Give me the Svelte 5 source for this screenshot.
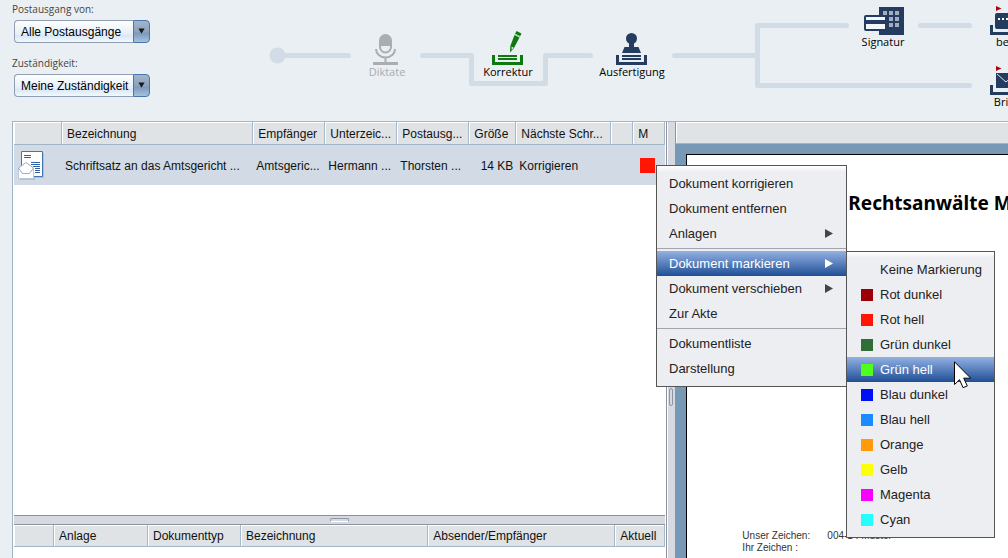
<script>
  let outbox = $state("Alle Postausgänge");
  let responsibility = $state("Meine Zuständigkeit");
  let marked = $state("Grün hell");

  // x / y is the top left corner of the 40px wide icon
  const steps = [
    { id: "dictate", name: "Diktate", x: 367, y: 31 },
    { id: "correct", name: "Korrektur", x: 488, y: 31 },
    { id: "issue", name: "Ausfertigung", x: 612, y: 31 },
    { id: "sign", name: "Signatur", x: 863, y: 1 },
    { id: "bea", name: "beA", x: 986, y: 1 },
    { id: "letter", name: "Brief", x: 986, y: 61 },
  ];

  const menu = [
    { name: "Dokument korrigieren" },
    { name: "Dokument entfernen" },
    { name: "Anlagen", arrow: true },
    { line: true },
    { name: "Dokument markieren", arrow: true, open: true },
    { name: "Dokument verschieben", arrow: true },
    { name: "Zur Akte" },
    { line: true },
    { name: "Dokumentliste" },
    { name: "Darstellung" },
  ];

  const colors = [
    { name: "Keine Markierung", color: "transparent" },
    { name: "Rot dunkel", color: "#9b0007" },
    { name: "Rot hell", color: "#ff1605" },
    { name: "Grün dunkel", color: "#2f6f37" },
    { name: "Grün hell", color: "#4dff1a" },
    { name: "Blau dunkel", color: "#000ff5" },
    { name: "Blau hell", color: "#1b8cff" },
    { name: "Orange", color: "#ff9a0b" },
    { name: "Gelb", color: "#fdff0a" },
    { name: "Magenta", color: "#f800ff" },
    { name: "Cyan", color: "#25fdff" },
  ];
</script>

{#snippet tray()}
  <path d="M4 24h3v7h25v-7h3v10H4z" />
{/snippet}

<div class="page">
  <header>
    <div class="filters">
      <div class="filter">
        <label for="outbox">Postausgang von:</label>
        <div class="combo">
          <select id="outbox" bind:value={outbox}>
            <option>Alle Postausgänge</option>
          </select>
          <svg viewBox="0 0 17 23"><path d="M5 8h7l-3.500 6z" /></svg>
        </div>
      </div>
      <div class="filter">
        <label for="responsibility">Zuständigkeit:</label>
        <div class="combo">
          <select id="responsibility" bind:value={responsibility}>
            <option>Meine Zuständigkeit</option>
          </select>
          <svg viewBox="0 0 17 23"><path d="M5 8h7l-3.500 6z" /></svg>
        </div>
      </div>
    </div>

    <svg class="track" width="1008" height="110" viewBox="0 0 1008 110">
      <circle cx="277.5" cy="55.5" r="8" />
      <path d="M278 55.500H348.500M422.500 55.500H471.500V83.500H545.500V55.500H590.500M674.500 55.500H757.500M846.500 25.500H757.500V85.500H969.500M920.500 25.500H969.500" />
    </svg>

    {#each steps as step}
      <button class="step {step.id}" style="left: {step.x}px; top: {step.y}px">
        <svg width="42" height="34" viewBox="0 0 42 34">
          {#if step.id === "dictate"}
            <path d="M12 9.500a6.500 6.500 0 0 1 13 0V16a6.500 6.500 0 0 1-13 0zM14 15v1a4.500 4.500 0 0 0 9 0v-1z" fill-rule="evenodd" />
            <path d="M9 18a9.500 8.500 0 0 0 19 0M18.500 26v5" class="line" />
            <path d="M6 31h25v3H6z" />
          {:else if step.id === "correct"}
            {@render tray()}
            <path d="M10 24h19v2H10zM10 27h19v2H10z" />
            <path d="M28.500 0l5 2.500-1.500 3-5-2.500zM26.500 4l5 2.500-5.500 10.500-4 4.500.3-6.500z" />
            <path d="M23.600 15.500l2 1.200-2 2z" class="shine" />
            <path d="M28 3.400l4 2" class="groove" />
          {:else if step.id === "issue"}
            {@render tray()}
            <path d="M10 24h19v2H10zM10 27h19v2H10z" />
            <circle cx="19.500" cy="7.500" r="5.500" />
            <path d="M17 11h5v5h4.500l2.500 6H10l2.500-6H17z" />
          {:else if step.id === "sign"}
            <path d="M16 6h25v28H16z" />
            <path d="M20 10h4v4h-4zM26 10h4v4h-4zM32 10h4v4h-4zM26 16h4v4h-4zM32 16h4v4h-4zM26 22h4v4h-4zM32 22h4v4h-4z" class="window" />
            <rect x="2" y="15" width="21" height="14" rx="1" class="card" />
            <path d="M2 19h21v4H2z" />
          {:else if step.id === "bea"}
            {@render tray()}
            <rect x="9" y="12" width="22" height="16" rx="2" />
            <path d="M12 17h2v2h-2zM16 17h2v2h-2zM20 17h2v2h-2zM24 17h2v2h-2z" class="dots" />
            <path d="M10 5l5.500 2.500L10 10z" class="flag" />
          {:else}
            {@render tray()}
            <path d="M10 12h20v15H10z" />
            <path d="M11 13l9 8 9-8" class="fold" />
            <path d="M10 5l5.500 2.500L10 10z" class="flag" />
          {/if}
        </svg>
        <span>{step.name}</span>
      </button>
    {/each}
  </header>

  <main>
    <section class="lists">
      <table>
        <colgroup>
          <col class="w48" /><col /><col class="w72" /><col class="w72" /><col class="w72" />
          <col class="w47" /><col class="w95" /><col class="w22" /><col class="w32" />
        </colgroup>
        <thead>
          <tr>
            <th></th>
            <th>Bezeichnung</th>
            <th>Empfänger</th>
            <th>Unterzeic...</th>
            <th>Postausg...</th>
            <th>Größe</th>
            <th>Nächste Schr...</th>
            <th></th>
            <th>M</th>
          </tr>
        </thead>
        <tbody>
          <tr>
            <td class="icon">
              <svg width="28" height="30" viewBox="0 0 28 30">
                <path d="M5 3h21v25H5zM2 20h15v10H2z" fill="#b5bfcb" />
                <path d="M3.500 1.500h21v25h-21z" fill="#fff" stroke="#4474b2" />
                <path d="M6 5.500h7M6 7.500h7M13 12.500h9M13 14.500h9M15 16.500h7M17 18.500h5M17 20.500h5M17 22.500h5" stroke="#2f62a5" />
                <path d="M.5 18.500h15v10H.5z" fill="#fff" stroke="#b9cadd" />
                <path d="M8 12.500l7.500 5.500-4 5.500h-7L.5 18z" fill="#fff" stroke="#8fadcd" stroke-linejoin="round" />
              </svg>
            </td>
            <td>Schriftsatz an das Amtsgericht ...</td>
            <td>Amtsgeric...</td>
            <td>Hermann ...</td>
            <td>Thorsten ...</td>
            <td class="size">14 KB</td>
            <td>Korrigieren</td>
            <td></td>
            <td class="mark"><i></i></td>
          </tr>
        </tbody>
      </table>
      <div class="rows"></div>
      <div class="hsplit"><i></i></div>
      <div class="attachments">
        <table>
          <colgroup>
            <col class="w40" /><col class="w94" /><col class="w93" /><col /><col class="w187" /><col class="w50" />
          </colgroup>
          <thead>
            <tr>
              <th></th>
              <th>Anlage</th>
              <th>Dokumenttyp</th>
              <th>Bezeichnung</th>
              <th>Absender/Empfänger</th>
              <th>Aktuell</th>
            </tr>
          </thead>
        </table>
      </div>
    </section>

    <div class="vsplit"><i></i></div>

    <section class="preview">
      <div class="bar"></div>
      <div class="desk">
        <article>
          <h1>Rechtsanwälte M</h1>
          <dl>
            <dt>Unser Zeichen:</dt>
            <dd>004-14 Muster</dd>
            <dt>Ihr Zeichen :</dt>
            <dd></dd>
          </dl>
        </article>
      </div>
    </section>
  </main>

  <ul class="menu main-menu">
    {#each menu as item}
      {#if item.line}
        <li class="line"></li>
      {:else}
        <li>
          <button class:active={item.open}>
            {item.name}
            {#if item.arrow}
              <svg width="8" height="9" viewBox="0 0 8 9"><path d="M0 0l8 4.500L0 9z" /></svg>
            {/if}
          </button>
          {#if item.open}
            <ul class="menu sub-menu">
              {#each colors as c}
                <li>
                  <button class:active={marked === c.name} onclick={() => (marked = c.name)}>
                    <i style="background: {c.color}"></i>{c.name}
                  </button>
                </li>
              {/each}
            </ul>
          {/if}
        </li>
      {/if}
    {/each}
  </ul>

  <svg class="cursor" width="20" height="29" viewBox="0 0 20 29">
    <path d="M.5.800V23.500l5-4.800 3.600 8 4.200-1.800-3.600-7.700h7z" />
  </svg>
</div>

<style>
  :global(body) {
    margin: 0;
    overflow: hidden;
  }
  .page {
    position: relative;
    display: flex;
    flex-direction: column;
    height: 100vh;
    overflow: hidden;
    background: #eaeff3;
    color: #111;
    font: 12px "Liberation Sans", Arial, sans-serif;
  }
  button {
    border: 0;
    padding: 0;
    background: none;
    color: inherit;
    font: inherit;
  }

  /* top */
  header {
    position: relative;
    flex: none;
    padding: 2px 12px 24px;
    overflow: hidden;
  }
  .filters {
    display: flex;
    flex-direction: column;
    gap: 13px;
    width: 138px;
  }
  .filter {
    display: flex;
    flex-direction: column;
    gap: 4px;
  }
  label {
    color: #444;
    font: 10px/14px "Open Sans", "Noto Sans", sans-serif;
  }
  .combo {
    display: flex;
    height: 23px;
    margin-left: 2px;
  }
  select {
    flex: 1;
    min-width: 0;
    appearance: none;
    border: 1px solid #919db0;
    border-right: 0;
    border-radius: 4px 0 0 4px;
    padding: 0 0 0 6px;
    background: linear-gradient(#fdfeff, #e6f0f8 60%, #d9e8f6 70%, #f3f9fd);
    color: #000;
    font: inherit;
  }
  .combo svg {
    box-sizing: border-box;
    width: 17px;
    height: 23px;
    border: 1px solid #4a76b0;
    border-radius: 0 4px 4px 0;
    background: linear-gradient(#a3b5c9, #8ba3bf 50%, #7c9abd 60%, #a6c2dc);
    pointer-events: none;
  }
  .combo path {
    fill: #1a1a1a;
  }
  .track {
    position: absolute;
    left: 0;
    top: 0;
    fill: none;
    stroke: #d2dce6;
    stroke-width: 5;
    stroke-linecap: round;
    stroke-linejoin: round;
  }
  .track circle {
    fill: #d2dce6;
    stroke: none;
  }
  .step {
    position: absolute;
    display: flex;
    flex-direction: column;
    align-items: center;
    width: 40px;
    color: #000;
    font: 11px/14px "Open Sans", "Noto Sans", sans-serif;
    white-space: nowrap;
  }
  .step svg {
    align-self: flex-start;
    flex: none;
    fill: #233c60;
    overflow: visible;
  }
  .step .line {
    fill: none;
    stroke: #aaadb2;
    stroke-width: 2;
  }
  .dictate {
    color: #a9acb1;
  }
  .dictate svg {
    fill: #aaadb2;
  }
  .correct svg {
    fill: #117711;
  }
  .step .shine {
    fill: #d8f5d8;
  }
  .step .groove {
    stroke: #6fe06f;
  }
  .step .window {
    fill: #a4adbd;
  }
  .step .card {
    fill: #f4f7f9;
    stroke: #233c60;
    stroke-width: 2;
  }
  .step .dots {
    fill: #fff;
  }
  .step .flag {
    fill: #b00014;
  }
  .step .fold {
    fill: none;
    stroke: #dfe5ec;
  }

  /* tables */
  main {
    flex: 1;
    display: flex;
    min-height: 0;
    margin-left: 12px;
    border-top: 1px solid #a2b5c4;
  }
  .lists {
    flex: 654 1 0;
    display: flex;
    flex-direction: column;
    min-width: 0;
    box-sizing: border-box;
    border-left: 1px solid #9db3c6;
    padding: 0 1px;
    background: #fff;
  }
  table {
    width: 100%;
    table-layout: fixed;
    border-collapse: separate;
    border-spacing: 0;
  }
  th,
  td {
    box-sizing: border-box;
    overflow: hidden;
    text-align: left;
    white-space: nowrap;
  }
  th {
    height: 23px;
    border-right: 1px solid #a5bbcd;
    border-bottom: 1px solid #a0b5c6;
    box-shadow: inset 1px 1px #fff;
    background: #dfe3e6;
    padding: 1px 0 0 5px;
    font-weight: normal;
  }
  td {
    height: 40px;
    padding: 2px 3px 0;
    background: #d2dbe5;
  }
  td.icon {
    padding: 0 0 0 4px;
  }
  .icon svg {
    display: block;
  }
  .size {
    text-align: right;
  }
  td.mark {
    padding: 0 0 0 7px;
  }
  .mark i {
    display: block;
    width: 15px;
    height: 15px;
    background: #ff1605;
  }
  .w22 { width: 22px; }
  .w32 { width: 32px; }
  .w40 { width: 40px; }
  .w47 { width: 47px; }
  .w48 { width: 48px; }
  .w50 { width: 50px; }
  .w72 { width: 72px; }
  .w93 { width: 93px; }
  .w94 { width: 94px; }
  .w95 { width: 95px; }
  .w187 { width: 187px; }
  .rows {
    flex: 1;
  }
  .hsplit {
    display: flex;
    justify-content: center;
    align-items: center;
    height: 8px;
    border: solid #8d929d;
    border-width: 1px 0;
    background: #d6d9df;
  }
  .hsplit i {
    width: 17px;
    height: 2px;
    border: 1px solid #8d95a5;
    border-bottom-color: #fff;
    border-radius: 2px;
  }
  .attachments {
    flex: none;
    padding-bottom: 11px;
  }
  .attachments th {
    height: 22px;
  }
  .vsplit {
    flex: none;
    box-sizing: border-box;
    width: 9px;
    padding: 266px 2px 0;
    border-left: 1px solid #8d929d;
    box-shadow: inset 1px 0 #fff;
    background: #d6d9df;
  }
  .vsplit i {
    display: block;
    box-sizing: border-box;
    width: 4px;
    height: 18px;
    border: 1px solid #8d95a5;
    border-radius: 2px;
  }

  /* document preview */
  .preview {
    flex: 334 1 0;
    display: flex;
    flex-direction: column;
    min-width: 0;
  }
  .bar {
    height: 21px;
    border-left: 1px solid #8d929d;
    border-bottom: 1px solid #a0b5c6;
    background: #dfe3e6;
    box-shadow: inset 1px 1px #fff;
  }
  .desk {
    flex: 1;
    display: flex;
    padding: 10px 0 0 11px;
    background: #7799b6;
  }
  article {
    flex: 1;
    min-width: 0;
    overflow: hidden;
    border: solid #000;
    border-width: 1px 0 0 1px;
    background: #fff;
    color: #000;
  }
  h1 {
    margin: 36px 0 0 161px;
    font: bold 19px/24px "Noto Sans", "Open Sans", sans-serif;
    white-space: nowrap;
  }
  dl {
    display: grid;
    grid-template-columns: 85px 1fr;
    margin: 315px 0 0 55px;
    color: #333;
    font-size: 10px;
    line-height: 12px;
  }
  dd {
    margin: 0;
  }

  /* context menu */
  .menu {
    position: absolute;
    box-sizing: border-box;
    margin: 0;
    border: 1px solid #555;
    padding: 5px 0;
    background: linear-gradient(#fff, #edeef2 6px);
    list-style: none;
  }
  .main-menu {
    left: 656px;
    top: 165px;
    width: 191px;
  }
  .sub-menu {
    left: 100%;
    top: 0;
    width: 149px;
  }
  .menu li {
    position: relative;
  }
  .menu button {
    display: flex;
    align-items: center;
    width: 100%;
    height: 25px;
    padding: 0 13px 0 12px;
    color: #222;
    font-size: 13px;
    white-space: nowrap;
  }
  .menu button svg {
    margin-left: auto;
    fill: #444;
  }
  .menu button i {
    flex: none;
    width: 12px;
    height: 12px;
    margin: 0 7px 0 2px;
  }
  .menu button.active {
    background: linear-gradient(#94b1e2, #1f4f96);
    color: #fff;
  }
  .menu button.active svg {
    fill: #fff;
  }
  .menu li.line {
    height: 5px;
    background: linear-gradient(#a2a5b0, #a2a5b0) 0 2px / 100% 1px no-repeat;
  }
  .cursor {
    position: absolute;
    left: 954px;
    top: 361px;
    fill: #fff;
    stroke: #000;
    pointer-events: none;
  }
</style>
